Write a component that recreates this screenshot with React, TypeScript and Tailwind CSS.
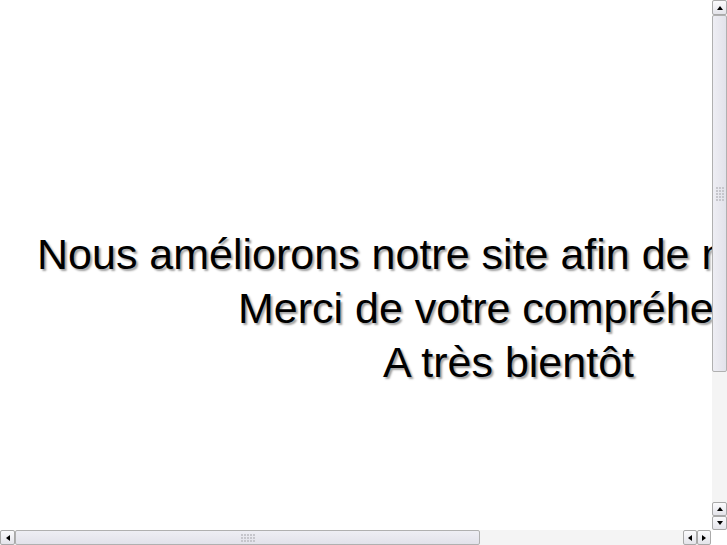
import React from 'react';

const Arrow: React.FC<{ dir: 'up' | 'down' | 'left' | 'right' }> = ({ dir }) => {
  const pts = {
    up: '1,5 4,1 7,5',
    down: '1,1 4,5 7,1',
    left: '5,1 1,4 5,7',
    right: '1,1 5,4 1,7',
  }[dir];
  const vertical = dir === 'up' || dir === 'down';
  return (
    <svg width={vertical ? 8 : 6} height={vertical ? 6 : 8} viewBox={vertical ? '0 0 8 6' : '0 0 6 8'}>
      <polygon points={pts} fill="#000" />
    </svg>
  );
};

const ScrollButton: React.FC<{ dir: 'up' | 'down' | 'left' | 'right'; className?: string }> = ({ dir, className = '' }) => (
  <div
    className={`flex items-center justify-center rounded-[2px] border border-[#a9a9a9] bg-gradient-to-b from-[#fbfbfd] to-[#e4e4ea] ${className}`}
  >
    <Arrow dir={dir} />
  </div>
);

const Grip: React.FC<{ vertical?: boolean }> = ({ vertical }) => (
  <div className={`grid gap-[1px] ${vertical ? 'grid-cols-3' : 'grid-cols-5'}`}>
    {Array.from({ length: 15 }).map((_, i) => (
      <div key={i} className="h-[2px] w-[2px] bg-[#c6c6cc]" />
    ))}
  </div>
);

const track = 'bg-[#f4f4f4] bg-[radial-gradient(#e2e2e2_0.6px,transparent_0.7px)] bg-[length:2px_2px]';

export default function App() {
  const lineStyle =
    "whitespace-nowrap text-[43px] leading-[54px] text-black [text-shadow:2px_2px_2px_#a0a0a0] [font-family:'Comic_Sans_MS','Liberation_Sans',sans-serif]";

  return (
    <div className="flex h-[545px] w-[727px] flex-col overflow-hidden bg-white">
      <div className="flex h-[530px]">
        <div className="flex-1 overflow-hidden pt-[227px]">
          <div className={`${lineStyle} ml-[37px]`}>Nous améliorons notre site afin de mieux vous servir</div>
          <div className={`${lineStyle} ml-[238px]`}>Merci de votre compréhension</div>
          <div className={`${lineStyle} ml-[383px]`}>A très bientôt</div>
        </div>
        <div className={`flex w-[15px] flex-col ${track}`}>
          <ScrollButton dir="up" className="h-[15px]" />
          <div className="flex h-[357px] items-center justify-center rounded-[2px] border border-[#b0b0b0] bg-gradient-to-r from-[#eeeef4] to-[#e2e2ea]">
            <Grip vertical />
          </div>
          <div className="flex-1" />
          <ScrollButton dir="up" className="h-[14px]" />
          <ScrollButton dir="down" className="h-[14px]" />
        </div>
      </div>
      <div className="flex h-[15px]">
        <div className={`flex flex-1 ${track}`}>
          <ScrollButton dir="left" className="w-[15px]" />
          <div className="flex w-[465px] items-center justify-center rounded-[2px] border border-[#b0b0b0] bg-gradient-to-b from-[#eeeef4] to-[#e2e2ea]">
            <Grip />
          </div>
          <div className="flex-1" />
          <ScrollButton dir="left" className="w-[14px]" />
          <ScrollButton dir="right" className="w-[14px]" />
        </div>
        <div className="w-[16px] bg-white" />
      </div>
    </div>
  );
}
